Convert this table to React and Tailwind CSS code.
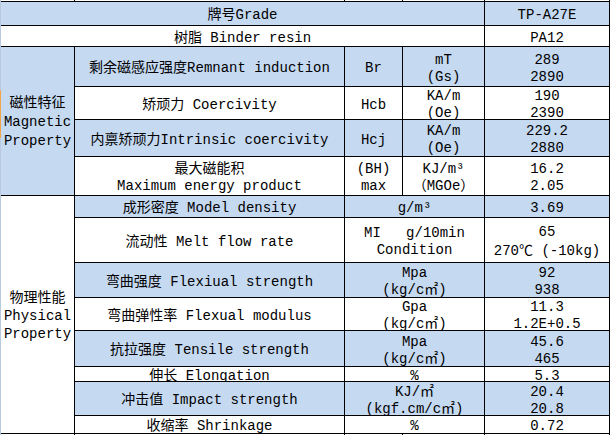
export default function App() {
  return (
    <div className="flex w-[611px] h-[435px] bg-white text-black font-['Liberation_Mono','Noto_Sans_CJK_SC',monospace] text-[14px]">
      {/* Excel row header edge */}
      <div className="w-px flex flex-col">
        <div className="h-[90px] bg-[#b9c9df]" />
        <div className="h-[48px] bg-[#f2a446]" />
        <div className="flex-1 bg-[#b9c9df]" />
      </div>

      <div className="grid grid-cols-[73px_269px_57px_81px_124px] grid-rows-[1px_23px_20px_39px_32px_36px_38px_21px_44px_34px_32px_35px_14px_33px_17px_1px] gap-px bg-black pr-px h-[435px]">
        {/* sliver of the row above */}
        <div className="bg-white" />
        <div className="bg-white" />
        <div className="bg-white" />
        <div className="bg-white" />
        <div className="bg-white" />

        <Cell className="col-span-4 bg-[#c5d9f1]">牌号Grade</Cell>
        <Cell className="bg-[#c5d9f1]">TP-A27E</Cell>

        <Cell className="col-span-4 bg-white">树脂 Binder resin</Cell>
        <Cell className="bg-white">PA12</Cell>

        {/* Magnetic */}
        <div className="row-span-4 bg-[#c5d9f1] flex flex-col items-center justify-center leading-[19px] pt-[2px] overflow-hidden">
          <div>磁性特征</div>
          <div>Magnetic</div>
          <div>Property</div>
        </div>
        <Cell className="bg-[#c5d9f1]">剩余磁感应强度Remnant induction</Cell>
        <Cell className="bg-[#c5d9f1]">Br</Cell>
        <Cell className="bg-[#c5d9f1]" lines={['mT', '(Gs)']} />
        <Cell className="bg-[#c5d9f1]" lines={['289', '2890']} />

        <Cell className="bg-white">矫顽力 Coercivity</Cell>
        <Cell className="bg-white">Hcb</Cell>
        <Cell className="bg-white" lines={['KA/m', '(Oe)']} />
        <Cell className="bg-white" lines={['190', '2390']} />

        <Cell className="bg-[#c5d9f1]">内禀矫顽力Intrinsic coercivity</Cell>
        <Cell className="bg-[#c5d9f1]">Hcj</Cell>
        <Cell className="bg-[#c5d9f1]" lines={['KA/m', '(Oe)']} />
        <Cell className="bg-[#c5d9f1]" lines={['229.2', '2880']} />

        <Cell className="bg-white" lines={['最大磁能积', 'Maximum energy product']} />
        <Cell className="bg-white" lines={['(BH)', 'max']} />
        <Cell className="bg-white" lines={['KJ/m³', '（MGOe）']} />
        <Cell className="bg-white" lines={['16.2', '2.05']} />

        {/* Physical */}
        <div className="row-span-8 bg-white flex flex-col items-center justify-center leading-[18px] pt-[2px] overflow-hidden">
          <div>物理性能</div>
          <div>Physical</div>
          <div>Property</div>
        </div>
        <Cell className="bg-[#c5d9f1]">成形密度 Model density</Cell>
        <Cell className="col-span-2 bg-[#c5d9f1]">g/m³</Cell>
        <Cell className="bg-[#c5d9f1]">3.69</Cell>

        <Cell className="bg-white">流动性 Melt flow rate</Cell>
        <Cell className="col-span-2 bg-white whitespace-pre" lines={['MI   g/10min', 'Condition']} />
        <Cell className="bg-white">
          <div>65</div>
          <div>
            270<span className="font-['Noto_Sans_CJK_SC',sans-serif]">℃</span> (-10kg)
          </div>
        </Cell>

        <Cell className="bg-[#c5d9f1]">弯曲强度 Flexiual strength</Cell>
        <Cell className="col-span-2 bg-[#c5d9f1]" lines={['Mpa', '(kg/c㎡)']} />
        <Cell className="bg-[#c5d9f1]" lines={['92', '938']} />

        <Cell className="bg-white">弯曲弹性率 Flexual modulus</Cell>
        <Cell className="col-span-2 bg-white" lines={['Gpa', '(kg/c㎡)']} />
        <Cell className="bg-white" lines={['11.3', '1.2E+0.5']} />

        <Cell className="bg-[#c5d9f1]">抗拉强度 Tensile strength</Cell>
        <Cell className="col-span-2 bg-[#c5d9f1]" lines={['Mpa', '(kg/c㎡)']} />
        <Cell className="bg-[#c5d9f1]" lines={['45.6', '465']} />

        <Cell className="bg-white">伸长 Elongation</Cell>
        <Cell className="col-span-2 bg-white">%</Cell>
        <Cell className="bg-white">5.3</Cell>

        <Cell className="bg-[#c5d9f1]">冲击值 Impact strength</Cell>
        <Cell className="col-span-2 bg-[#c5d9f1]" lines={['KJ/㎡', '(kgf.cm/c㎡)']} />
        <Cell className="bg-[#c5d9f1]" lines={['20.4', '20.8']} />

        <Cell className="bg-white">收缩率 Shrinkage</Cell>
        <Cell className="col-span-2 bg-white">%</Cell>
        <Cell className="bg-white">0.72</Cell>

        {/* sliver of the row below */}
        <div className="bg-white" />
        <div className="bg-white" />
        <div className="bg-white" />
        <div className="bg-white" />
        <div className="bg-white" />
      </div>
    </div>
  );
}

function Cell({ className = '', lines, children }) {
  return (
    <div className={`flex flex-col items-center justify-center text-center overflow-hidden pt-[4px] leading-[17px] whitespace-nowrap ${className}`}>
      {lines ? lines.map((l, i) => <div key={i}>{l}</div>) : typeof children === 'string' ? <div>{children}</div> : children}
    </div>
  );
}
